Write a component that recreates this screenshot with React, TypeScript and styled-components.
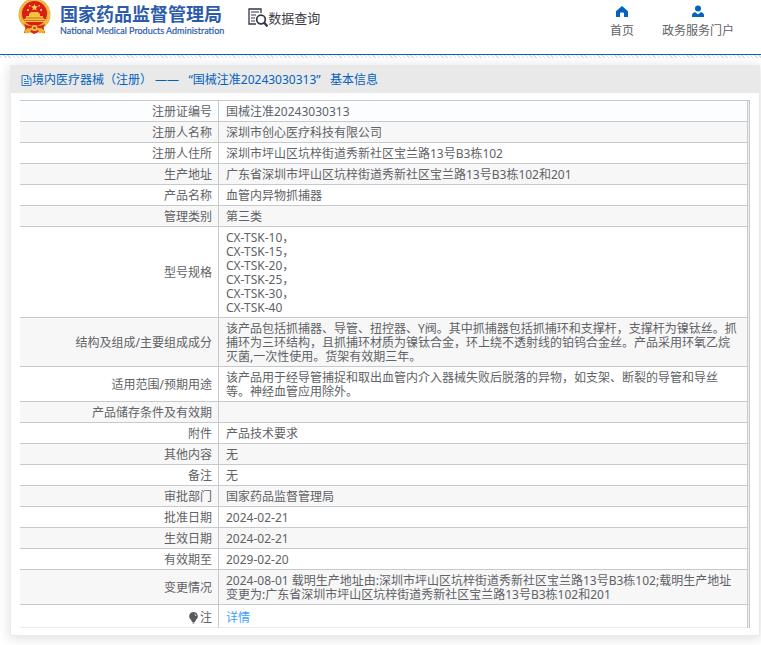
import React from "react";
import styled, { createGlobalStyle } from "styled-components";

const GlobalStyle = createGlobalStyle`
  body {
    margin: 0;
    background: #fff;
    color: #606266;
    font-family: "Noto Sans", "Noto Sans CJK SC", sans-serif;
    font-size: 12px;
    line-height: 14px;
  }
  * { box-sizing: border-box; }
`;

const Header = styled.header`
  display: flex;
  align-items: flex-start;
  height: 55px;
  padding: 0 27px 0 18px;
  border-bottom: 1px solid #0262bf;
`;

const Brand = styled.a`
  display: flex;
  gap: 9px;
  color: #2d5bab;
  text-decoration: none;
  white-space: nowrap;
`;

const BrandText = styled.span`
  display: flex;
  flex-direction: column;
  padding-top: 2px;
`;

const BrandName = styled.span`
  font: 700 18px/22px "Noto Sans CJK SC", sans-serif;
`;

const BrandEnglish = styled.span`
  font: 400 9px/13px Lato, sans-serif;
  -webkit-text-stroke: 0.2px currentColor;
`;

const Section = styled.div`
  display: flex;
  align-items: center;
  margin-left: 24px;
  padding-top: 7px;
  color: #3c3c46;
  font-size: 13px;
  line-height: 20px;
  white-space: nowrap;
`;

const Nav = styled.nav`
  display: flex;
  gap: 28px;
  margin-left: auto;
  padding-top: 5px;
`;

const NavLink = styled.a`
  display: flex;
  flex-direction: column;
  align-items: center;
  gap: 5px;
  color: #606266;
  text-decoration: none;
  line-height: 16px;
  white-space: nowrap;
`;

const Stripe = styled.div`
  height: 3px;
  background: repeating-linear-gradient(45deg, #fff 0 1px, #dedede 1px 2px, #fff 2px 3px);
`;

const Card = styled.main`
  margin: 7px 1px 9px 10px;
  border: 1px solid #e9eaef;
  border-top: 0;
  background: #fff;
  box-shadow: 0 2px 12px rgba(0, 0, 0, 0.14);
`;

const CardTitle = styled.h1`
  display: flex;
  align-items: center;
  height: 28px;
  margin: 0;
  padding: 2px 10px 0;
  background: #e9e9e9;
  color: #0262bf;
  font-size: 12px;
  font-weight: 400;
  white-space: pre;
`;

const TableFrame = styled.div`
  margin: 7px 9px;
  padding-right: 1px;
  border-top: 1px solid #c8c9cc;
  border-right: 1px solid #c8c9cc;
  background: #eeeef5;
`;

const Table = styled.table`
  width: 100%;
  table-layout: fixed;
  border-collapse: separate;
  border-spacing: 0;
  border-right: 1px solid #c8c9cc;
  background: #fff;
`;

const Row = styled.tr`
  &:nth-child(even) { background: #f7f7f7; }
  &:first-child { background: #fcfdff; }
  & > * {
    padding: 4px 6px 2px;
    border-bottom: 1px solid #c8c9cc;
    vertical-align: middle;
  }
  &:last-child > * {
    padding: 6px 6px 2px;
    border-bottom-color: #ebebeb;
  }
  & > td, &:last-child > td {
    padding-left: 7px;
    padding-right: 8px;
  }
`;

const Label = styled.th`
  width: 199px;
  border-right: 1px solid #c8c9cc;
  font-weight: 400;
  text-align: right;
`;

const Value = styled.td`
  height: 21px;
  white-space: pre-line;
  overflow-wrap: break-word;
`;

const DetailLink = styled.a`
  color: #409eff;
  text-decoration: none;
`;

const NoteLabel = styled.span`
  display: flex;
  align-items: center;
  justify-content: flex-end;
  gap: 1px;
`;

function Emblem() {
  return (
    <svg width="33" height="35" viewBox="0 0 33 35" aria-hidden="true">
      <path d="M8 26 6 33l6-1 4 2 5-2 6 1-2-7Z" fill="#d92718" />
      <circle cx="16.5" cy="14.5" r="16" fill="#e9af35" />
      <circle cx="16.5" cy="14.5" r="14.5" fill="none" stroke="#f7d264" strokeWidth="1" strokeDasharray="3 1" />
      <circle cx="16.5" cy="13.5" r="12.5" fill="#dc1c17" />
      <path d="m16.5 4 1 2.3 2.5.2-2 1.6.7 2.4-2.2-1.3-2.2 1.3.7-2.4-2-1.6 2.5-.2Z" fill="#ffd952" />
      <path d="M9 9h2v2H9zM22 9h2v2h-2zM11 5h1.5v1.5H11zM20.500 5H22v1.500h-1.500z" fill="#f8c73d" />
      <path d="m11 14 2-2h7l2 2v2h3v2l3 2v2H5v-2l3-2v-2h3Z" fill="#f5c13e" />
      <path d="M8 18h17M6 20.500h21" stroke="#c64920" strokeWidth=".7" />
      <path d="M6 24c6 3 15 3 21 0l-2 5-5-1-3.500 3-3.500-3-5 1Z" fill="#d8281b" />
      <path d="M7 30l3-2 3 2-1 3-5 .5M26 30l-3-2-3 2 1 3 5 .5" fill="#efb332" />
      <circle cx="16.5" cy="28" r="3" fill="#f4c449" />
      <circle cx="16.5" cy="28" r="1.300" fill="#d12d1a" />
    </svg>
  );
}

function SearchDocumentIcon() {
  return (
    <svg width="20" height="21" viewBox="0 0 20 21" fill="none" stroke="#34344a" aria-hidden="true">
      <path d="M13 6V2H1v15h7" strokeWidth="1.300" />
      <path d="M3 5h8M3 8h5M3 11h4M3 14h4" strokeWidth="1.200" />
      <circle cx="13" cy="12.500" r="4.300" strokeWidth="1.700" />
      <path d="m16 15.500 3.500 4" strokeWidth="2.300" />
    </svg>
  );
}

function HomeIcon() {
  return (
    <svg width="14" height="13" viewBox="0 0 14 13" aria-hidden="true">
      <path d="M7 1 1 6.300V12h4V8.500q0-1 1-1h2q1 0 1 1V12h4V6.300Z" fill="#0262bf" />
    </svg>
  );
}

function PersonIcon() {
  return (
    <svg width="14" height="13" viewBox="0 0 14 13" aria-hidden="true">
      <circle cx="7" cy="3.500" r="3" fill="#0262bf" />
      <path d="M1 12V10q0-2 3-3l3 2.500L10 7q3 1 3 3v2Z" fill="#0262bf" />
    </svg>
  );
}

function DocumentIcon() {
  return (
    <svg width="11" height="13" viewBox="0 0 11 13" fill="none" stroke="#0262bf" strokeWidth=".8" aria-hidden="true">
      <path d="M1 1.500h6l3 3v7H1ZM6.500 1.500v3.500H10M3 5.500h2M3 7.500h5M3 9.500h5" />
    </svg>
  );
}

function BulbIcon() {
  return (
    <svg width="11" height="12" viewBox="0 0 11 12" aria-hidden="true">
      <path d="M5.500 0a4.300 4.300 0 0 1 2.500 7.800L7 10H4L3 7.800A4.300 4.300 0 0 1 5.500 0ZM4.500 10.500h2v1h-2Z" fill="#56585c" />
      <path d="M6.500 2q1.500.5 1.500 2" fill="none" stroke="#fff" strokeWidth=".8" />
    </svg>
  );
}

const records: [string, string][] = [
  ["注册证编号", "国械注准20243030313"],
  ["注册人名称", "深圳市创心医疗科技有限公司"],
  ["注册人住所", "深圳市坪山区坑梓街道秀新社区宝兰路13号B3栋102"],
  ["生产地址", "广东省深圳市坪山区坑梓街道秀新社区宝兰路13号B3栋102和201"],
  ["产品名称", "血管内异物抓捕器"],
  ["管理类别", "第三类"],
  ["型号规格", "CX-TSK-10，\nCX-TSK-15，\nCX-TSK-20，\nCX-TSK-25，\nCX-TSK-30，\nCX-TSK-40"],
  ["结构及组成/主要组成成分", "该产品包括抓捕器、导管、扭控器、Y阀。其中抓捕器包括抓捕环和支撑杆，支撑杆为镍钛丝。抓捕环为三环结构，且抓捕环材质为镍钛合金，环上绕不透射线的铂钨合金丝。产品采用环氧乙烷灭菌,一次性使用。货架有效期三年。"],
  ["适用范围/预期用途", "该产品用于经导管捕捉和取出血管内介入器械失败后脱落的异物，如支架、断裂的导管和导丝等。神经血管应用除外。"],
  ["产品储存条件及有效期", ""],
  ["附件", "产品技术要求"],
  ["其他内容", "无"],
  ["备注", "无"],
  ["审批部门", "国家药品监督管理局"],
  ["批准日期", "2024-02-21"],
  ["生效日期", "2024-02-21"],
  ["有效期至", "2029-02-20"],
  ["变更情况", "2024-08-01 载明生产地址由:深圳市坪山区坑梓街道秀新社区宝兰路13号B3栋102;载明生产地址变更为:广东省深圳市坪山区坑梓街道秀新社区宝兰路13号B3栋102和201"],
];

export default function App() {
  return (
    <div lang="zh-CN">
      <GlobalStyle />
      <Header>
        <Brand href="#">
          <Emblem />
          <BrandText>
            <BrandName>国家药品监督管理局</BrandName>
            <BrandEnglish>National Medical Products Administration</BrandEnglish>
          </BrandText>
        </Brand>
        <Section>
          <SearchDocumentIcon />
          数据查询
        </Section>
        <Nav>
          <NavLink href="#"><HomeIcon />首页</NavLink>
          <NavLink href="#"><PersonIcon />政务服务门户</NavLink>
        </Nav>
      </Header>
      <Stripe />
      <Card>
        <CardTitle>
          <DocumentIcon />
          境内医疗器械（注册） ——   “国械注准20243030313”   基本信息
        </CardTitle>
        <TableFrame>
          <Table>
            <tbody>
              {records.map(([label, value]) => (
                <Row key={label}>
                  <Label scope="row">{label}</Label>
                  <Value>{value}</Value>
                </Row>
              ))}
              <Row>
                <Label scope="row"><NoteLabel><BulbIcon />注</NoteLabel></Label>
                <Value><DetailLink href="#">详情</DetailLink></Value>
              </Row>
            </tbody>
          </Table>
        </TableFrame>
      </Card>
    </div>
  );
}
